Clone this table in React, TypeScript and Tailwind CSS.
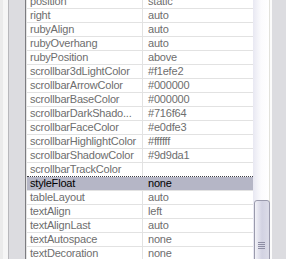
import React from "react";

const rows: [string, string][] = [
  ["position", "static"],
  ["right", "auto"],
  ["rubyAlign", "auto"],
  ["rubyOverhang", "auto"],
  ["rubyPosition", "above"],
  ["scrollbar3dLightColor", "#f1efe2"],
  ["scrollbarArrowColor", "#000000"],
  ["scrollbarBaseColor", "#000000"],
  ["scrollbarDarkShado...", "#716f64"],
  ["scrollbarFaceColor", "#e0dfe3"],
  ["scrollbarHighlightColor", "#ffffff"],
  ["scrollbarShadowColor", "#9d9da1"],
  ["scrollbarTrackColor", ""],
  ["styleFloat", "none"],
  ["tableLayout", "auto"],
  ["textAlign", "left"],
  ["textAlignLast", "auto"],
  ["textAutospace", "none"],
  ["textDecoration", "none"],
];

const SEL = 13;

export default function App() {
  return (
    <div
      className="w-[286px] h-[259px] overflow-hidden flex bg-[#dcdce0]"
      style={{ fontFamily: '"Liberation Sans", Arial, sans-serif' }}
    >
      {/* left strip */}
      <div className="flex h-full shrink-0">
        <div className="w-[3px] bg-[#ebebeb]" />
        <div className="w-[5px] bg-[#f6f6f6]" />
        <div className="w-px bg-[#b8b8bc]" />
        <div className="w-[16px] bg-[#dcdce0]" />
        <div className="w-px bg-[#7c7c80]" />
        <div className="w-px bg-[#e4e4e4]" />
      </div>
      {/* table */}
      <div className="w-[226px] h-full overflow-hidden bg-white shrink-0">
        <div className="-mt-[5px] flex flex-col">
          {rows.map(([k, v], i) => {
            const sel = i === SEL;
            const beforeSel = i === SEL - 1;
            return (
              <div
                key={k}
                className={`flex h-[14px] border-b ${
                  beforeSel ? "border-dotted border-[#404048]" : "border-[#e2e2e2]"
                } ${sel ? "bg-[#b5b6c6] text-black" : "text-[#6e6e6e]"}`}
              >
                <div className="w-[115px] h-[13px] pl-[3px] overflow-hidden whitespace-nowrap text-[11px] leading-[13px] tracking-[-0.2px]">
                  {k}
                </div>
                <div className={`w-px h-[13px] ${sel ? "" : "bg-[#e2e2e2]"}`} />
                <div className="w-[110px] h-[13px] pl-[5px] overflow-hidden whitespace-nowrap text-[11px] leading-[13px] tracking-[-0.2px]">
                  {v}
                </div>
              </div>
            );
          })}
        </div>
      </div>
      {/* scrollbar */}
      <div className="relative w-[16px] h-full shrink-0 bg-gradient-to-r from-[#e8e8f2] via-[#fbfbfd] to-white">
        <div className="absolute left-[1px] top-[200px] w-[16px] h-[70px] rounded-t-[3px] border border-[#9a9aac] bg-gradient-to-r from-[#f2f2f8] via-[#d2d2e2] to-[#dcdce8]">
          <div className="absolute left-[3px] top-[41px] flex flex-col gap-px">
            <div className="w-[7px] h-px bg-[#8e8ea4]" />
            <div className="w-[7px] h-px bg-[#8e8ea4]" />
            <div className="w-[7px] h-px bg-[#8e8ea4]" />
            <div className="w-[7px] h-px bg-[#8e8ea4]" />
          </div>
        </div>
      </div>
      <div className="w-px h-full bg-[#e2e2dc] shrink-0" />
      <div className="w-[2px] h-full bg-[#fbfbfb] shrink-0" />
      <div className="flex-1 h-full bg-[#dcdce0]" />
    </div>
  );
}
